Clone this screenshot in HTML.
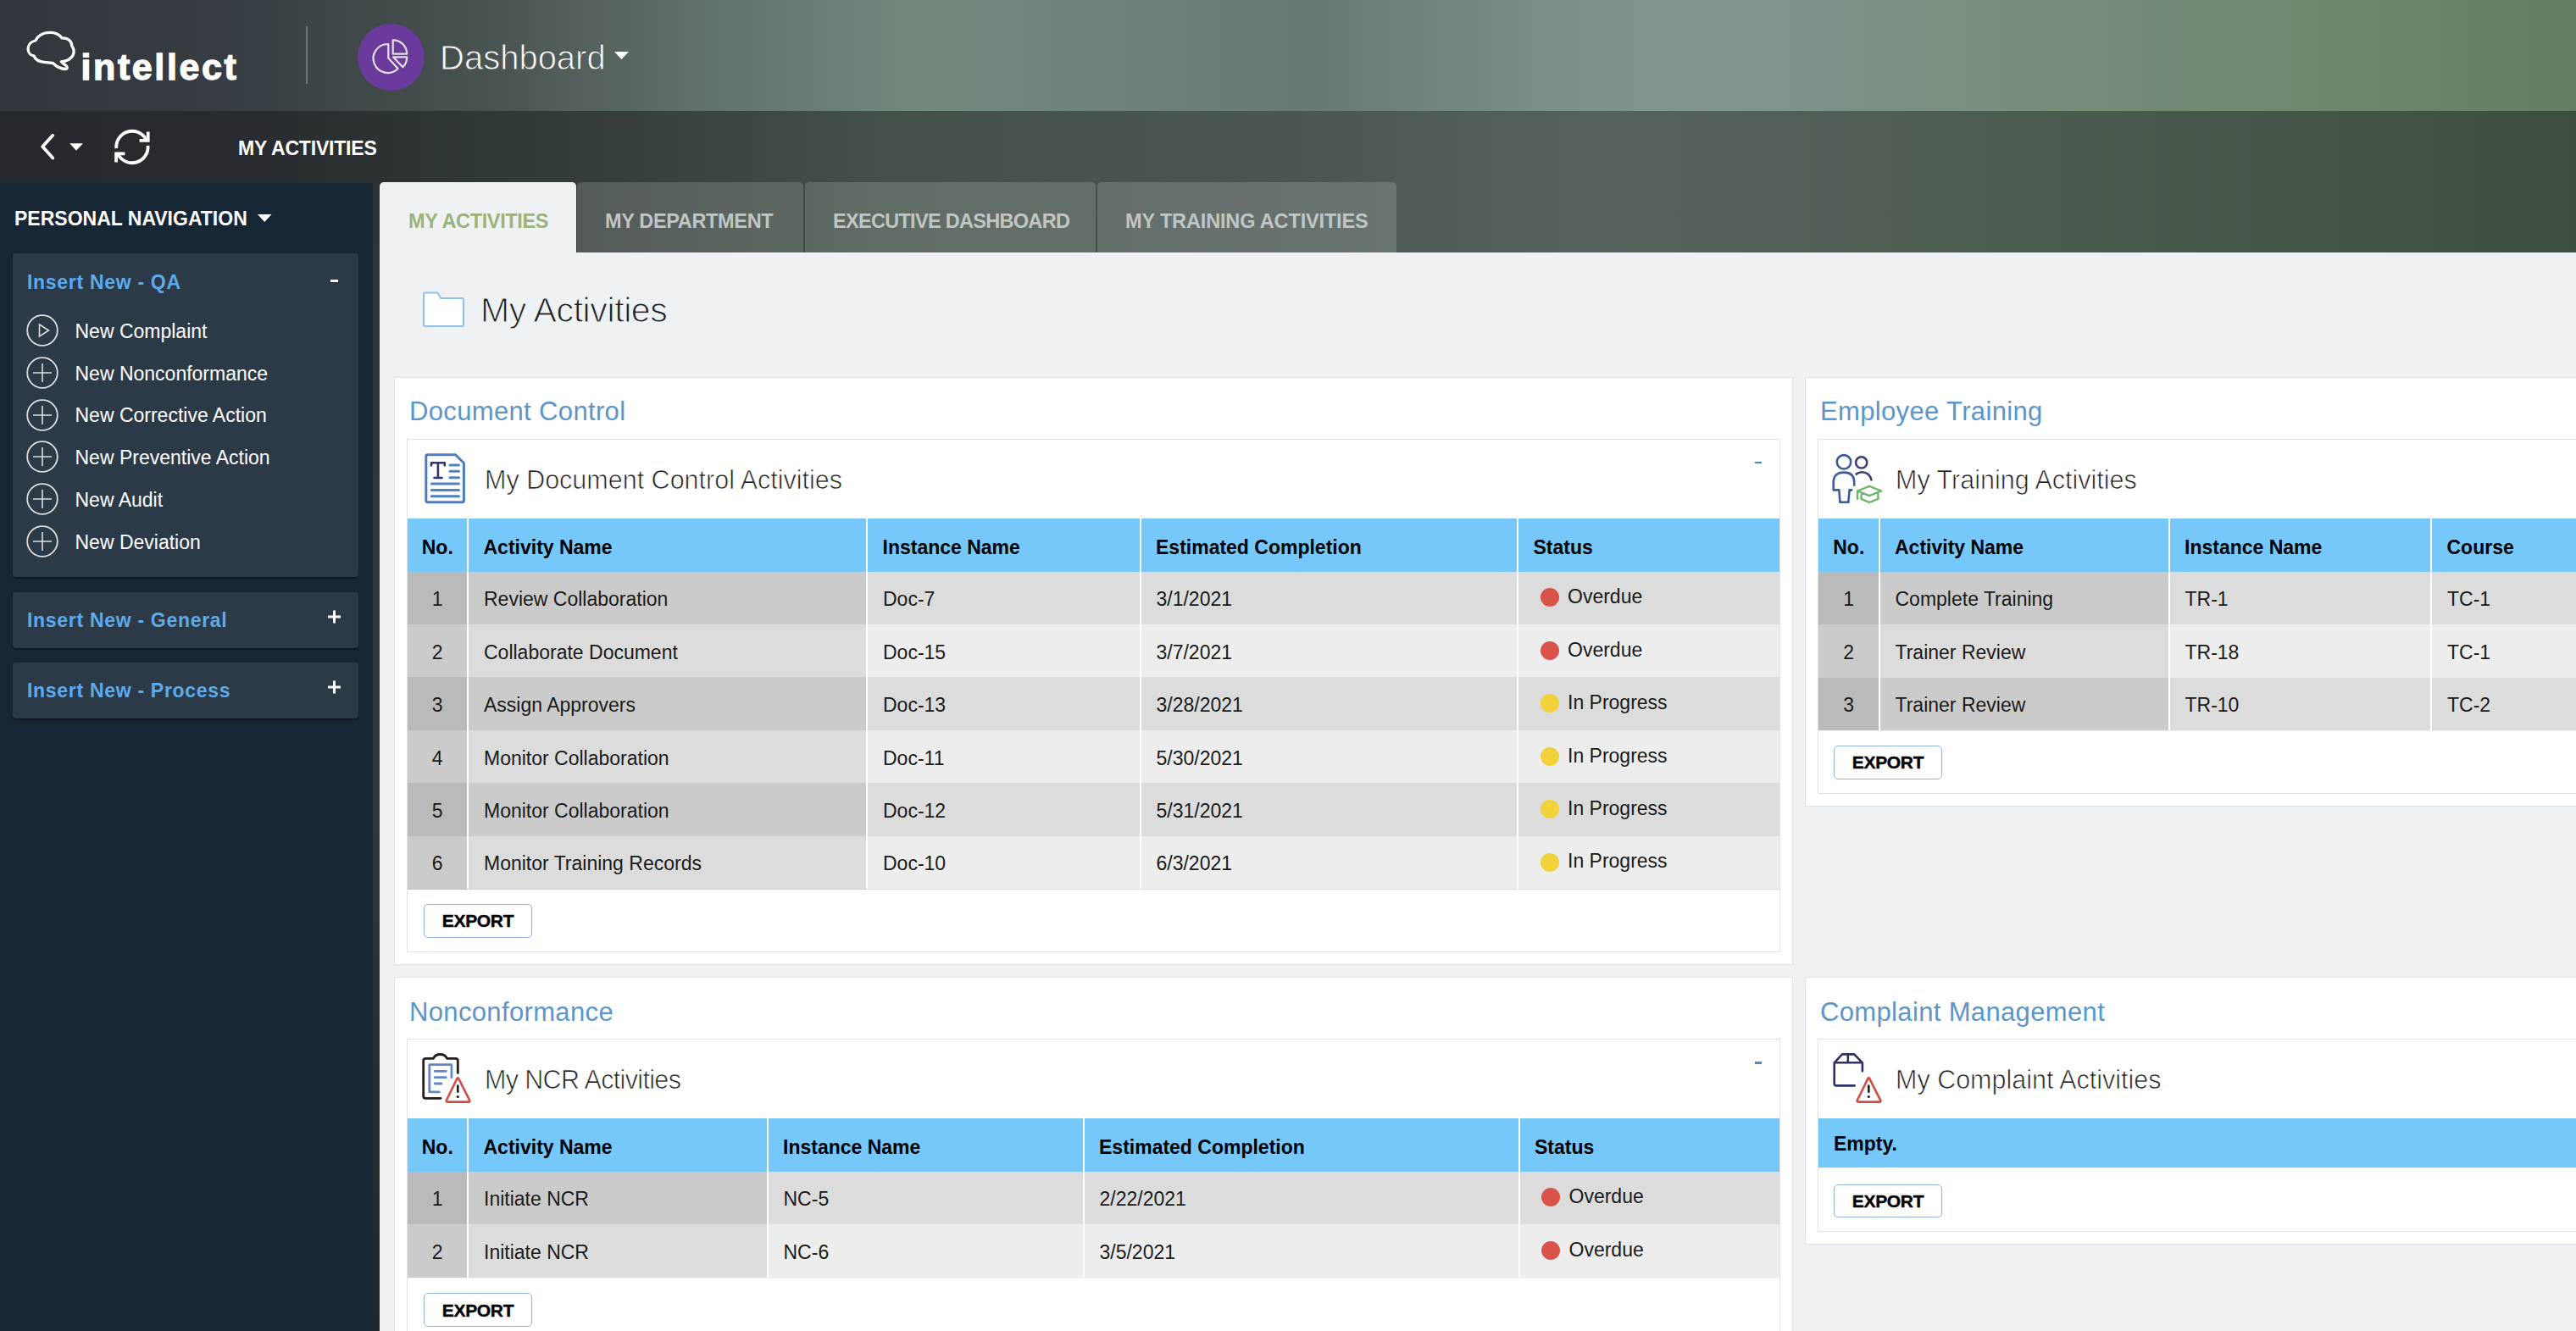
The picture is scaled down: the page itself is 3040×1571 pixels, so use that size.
<!DOCTYPE html>
<html><head><meta charset="utf-8">
<style>
*{box-sizing:border-box;margin:0;padding:0}
html,body{width:3040px;height:1571px;overflow:hidden}
body{position:relative;font-family:"Liberation Sans",sans-serif;background:#eff2f5;color:#222}
.a{position:absolute}
.t{position:absolute;line-height:1;white-space:nowrap}
#hdr{left:0;top:0;width:3040px;height:131px;background:linear-gradient(90deg,#32363d 0%,#363c42 8%,#46504f 18%,#63736d 28%,#738a7c 36%,#6f807a 44%,#687877 51%,#7b8e89 60%,#82958f 66%,#7b9082 74%,#748c78 82%,#6e8870 90%,#637c64 100%)}
#band{left:0;top:131px;width:3040px;height:167px;background:linear-gradient(90deg,#25282c 0%,#282c30 10%,#333b3a 22%,#435047 34%,#47534d 42%,#4b5653 50%,#56625d 62%,#525f56 70%,#4b5b4f 80%,#445548 90%,#3d4e40 100%)}
#side{left:0;top:216px;width:440px;height:1355px;background:#172634}
#strip{left:440px;top:215px;width:8px;height:1356px;background:linear-gradient(180deg,#2c3336 0%,#2e393c 35%,#2e383b 55%,#272d30 80%,#222629 100%)}
#content{left:448px;top:298px;width:2592px;height:1273px;background:#eff2f5}
.tab{position:absolute;top:215px;height:83px;border-radius:5px 5px 0 0;background:rgba(255,255,255,0.16)}
.tabt{font-weight:700;font-size:23.5px;color:#c0c6c4;letter-spacing:-0.35px}
.sp{position:absolute;left:15px;width:408px;background:#2c3a48;border-radius:4px;box-shadow:0 2px 1px rgba(0,0,0,0.35)}
.sph{font-weight:700;font-size:23px;color:#5eaaea;letter-spacing:0.7px}
.si{font-size:23px;color:#fff}
.card{position:absolute;background:#fff;border:1px solid #dfe3e7}
.ctitle{font-size:31px;color:#5b95c9}
.inner{position:absolute;background:#fff;border:1px solid #dfe3e7}
.ptitle{font-size:30.5px;color:#222;-webkit-text-stroke:0.7px #fff}
.btn{position:absolute;width:128px;height:40px;border:1.5px solid #8eb3dc;border-radius:5px;background:#fff}
.btnt{font-weight:700;font-size:21px;color:#000;letter-spacing:-0.3px;-webkit-text-stroke:0.4px #000}
</style></head><body>
<div id="hdr" class="a"></div>
<div id="band" class="a"></div>
<div id="side" class="a"></div>
<div id="strip" class="a"></div>
<div id="content" class="a"></div>

<svg class="a" style="left:25px;top:30px" width="70" height="60" viewBox="0 0 70 60">
<path d="M47.3,42.8 C52,42.5 58,40 61,35.5 C63,31 62,27 59.8,24.3 C60,19 55.5,14.5 48.2,14.9 C44,9.5 38.5,8.2 33.3,8.4 C25,8.5 19.5,13 16.7,18 C11.5,19 8,23 8.1,28 C8.2,32 11,35.5 14.9,36 C17,40.5 22,43 27,43.3 L37.5,44.5 C42,49 47,51.5 52.5,51.5 C55,51 54.5,48.5 52.5,47 C50.5,45.5 48.5,44.5 47.3,42.8 Z" fill="none" stroke="#fff" stroke-width="3.3" stroke-linejoin="round"/>
</svg>
<div class="t" style="left:95.5px;top:57.5px;font-size:43px;font-weight:700;color:#fff;letter-spacing:2.6px;-webkit-text-stroke:1.3px #fff">intellect</div>
<div class="a" style="left:361px;top:31px;width:1.5px;height:68px;background:rgba(255,255,255,0.28)"></div>
<div class="a" style="left:421.5px;top:27.5px;width:79px;height:79px;border-radius:50%;background:#6a3a9c"></div>
<svg class="a" style="left:421px;top:27px" width="80" height="80" viewBox="0 0 80 80">
<g fill="none" stroke="#e6e0ec" stroke-width="2.2" stroke-linejoin="round">
<path d="M37.3,25 A17,17 0 1 0 48.6,54 L37.3,41.5 Z"/>
<path d="M42.7,20.3 L42.7,36.7 L59.2,36.7 A16.4,16.4 0 0 0 42.7,20.3 Z"/>
<path d="M43,40.3 L59.2,40.3 A16.2,16.2 0 0 1 54.4,52.2 Z"/>
</g></svg>
<div class="t" style="left:519px;top:48px;font-size:40px;color:#fff;-webkit-text-stroke:0.9px #4b5755">Dashboard</div>
<svg class="a" style="left:724px;top:60px" width="20" height="12"><path d="M1,1 L18,1 L9.5,10 Z" fill="#fff"/></svg>
<svg class="a" style="left:40px;top:145px" width="150" height="55" viewBox="0 0 150 55">
<path d="M22.3,14.8 L10.2,28 L22.3,41.6" fill="none" stroke="#fff" stroke-width="3.8" stroke-linecap="round" stroke-linejoin="round"/>
<path d="M42.2,24.3 L58,24.3 L50,32.8 Z" fill="#fff"/>
<g fill="none" stroke="#fff" stroke-width="3.8">
<path d="M97.27,30.13 A18.7,18.7 0 0 1 132.1,19.15"/>
<path d="M134.53,26.87 A18.7,18.7 0 0 1 99.7,37.85"/>
<path d="M134.7,10.6 V20.8 H124.6" stroke-linecap="butt" stroke-linejoin="miter"/>
<path d="M97.1,46.5 V36.3 H107.4" stroke-linecap="butt" stroke-linejoin="miter"/>
</g>
</svg>
<div class="t" style="left:281px;top:163.5px;font-size:23px;font-weight:700;color:#fff;letter-spacing:-0.2px">MY ACTIVITIES</div>
<div class="tab" style="left:448px;width:232px;background:#eff2f5"></div>
<div class="t tabt" style="left:482px;top:249.5px;color:#9cb27a">MY ACTIVITIES</div>
<div class="tab" style="left:681px;width:267px"></div>
<div class="t tabt" style="left:714px;top:249.5px">MY DEPARTMENT</div>
<div class="tab" style="left:950px;width:343px"></div>
<div class="t tabt" style="left:983px;top:249.5px;letter-spacing:-0.7px">EXECUTIVE DASHBOARD</div>
<div class="tab" style="left:1295px;width:353px"></div>
<div class="t tabt" style="left:1328px;top:249.5px;letter-spacing:-0.15px">MY TRAINING ACTIVITIES</div>

<div class="t" style="left:17px;top:247px;font-size:23px;font-weight:700;color:#fff">PERSONAL NAVIGATION</div>
<svg class="a" style="left:303px;top:252px" width="20" height="12"><path d="M1,1 L17.5,1 L9.2,10 Z" fill="#fff"/></svg>
<div class="sp" style="top:299px;height:382px"></div>
<div class="t sph" style="left:32px;top:322px">Insert New - QA</div>
<div class="a" style="left:390px;top:330px;width:9px;height:3px;background:#fff"></div>
<div class="sp" style="top:699px;height:66px"></div>
<div class="t sph" style="left:32px;top:720.5px">Insert New - General</div>
<svg class="a" style="left:386px;top:719px" width="18" height="18"><path d="M8.5,1.5 V16.5 M1,9 H16" stroke="#fff" stroke-width="3"/></svg>
<div class="sp" style="top:782px;height:66px"></div>
<div class="t sph" style="left:32px;top:803.5px">Insert New - Process</div>
<svg class="a" style="left:386px;top:802px" width="18" height="18"><path d="M8.5,1.5 V16.5 M1,9 H16" stroke="#fff" stroke-width="3"/></svg>
<svg class="a" style="left:31px;top:371.0px" width="38" height="38" viewBox="0 0 38 38"><circle cx="19" cy="19" r="17.8" fill="none" stroke="#ddd" stroke-width="1.8"/><path d="M15.5,12 L26.5,19 L15.5,26 Z" fill="none" stroke="#ddd" stroke-width="1.6" stroke-linejoin="miter"/></svg>
<div class="t si" style="left:88.5px;top:379.8px">New Complaint</div>
<svg class="a" style="left:31px;top:420.8px" width="38" height="38" viewBox="0 0 38 38"><circle cx="19" cy="19" r="17.8" fill="none" stroke="#ddd" stroke-width="1.8"/><path d="M19,8 V30 M8,19 H30" stroke="#ddd" stroke-width="1.6"/></svg>
<div class="t si" style="left:88.5px;top:429.6px">New Nonconformance</div>
<svg class="a" style="left:31px;top:470.6px" width="38" height="38" viewBox="0 0 38 38"><circle cx="19" cy="19" r="17.8" fill="none" stroke="#ddd" stroke-width="1.8"/><path d="M19,8 V30 M8,19 H30" stroke="#ddd" stroke-width="1.6"/></svg>
<div class="t si" style="left:88.5px;top:479.4px">New Corrective Action</div>
<svg class="a" style="left:31px;top:520.4px" width="38" height="38" viewBox="0 0 38 38"><circle cx="19" cy="19" r="17.8" fill="none" stroke="#ddd" stroke-width="1.8"/><path d="M19,8 V30 M8,19 H30" stroke="#ddd" stroke-width="1.6"/></svg>
<div class="t si" style="left:88.5px;top:529.2px">New Preventive Action</div>
<svg class="a" style="left:31px;top:570.2px" width="38" height="38" viewBox="0 0 38 38"><circle cx="19" cy="19" r="17.8" fill="none" stroke="#ddd" stroke-width="1.8"/><path d="M19,8 V30 M8,19 H30" stroke="#ddd" stroke-width="1.6"/></svg>
<div class="t si" style="left:88.5px;top:579.0px">New Audit</div>
<svg class="a" style="left:31px;top:620.0px" width="38" height="38" viewBox="0 0 38 38"><circle cx="19" cy="19" r="17.8" fill="none" stroke="#ddd" stroke-width="1.8"/><path d="M19,8 V30 M8,19 H30" stroke="#ddd" stroke-width="1.6"/></svg>
<div class="t si" style="left:88.5px;top:628.8px">New Deviation</div>
<svg class="a" style="left:490px;top:335px" width="70" height="60" viewBox="0 0 70 60"><path d="M10,11.5 Q10,10.4 11.2,10.4 L25.6,10.4 Q26.6,10.4 27.1,11.3 L30.2,17.1 L55.8,17.1 Q57,17.1 57,18.3 L57,48.8 Q57,50 55.8,50 L11.2,50 Q10,50 10,48.8 Z" fill="#fff" stroke="#8ec1e9" stroke-width="2" stroke-linejoin="round"/></svg>
<div class="t " style="left:567.0px;top:346.1px;font-size:41px;color:#1e1e1e;letter-spacing:-0.4px;-webkit-text-stroke:1px #eff2f5">My Activities</div>
<div class="card" style="left:465.0px;top:444.5px;width:1651.0px;height:694.5px"></div>
<div class="t ctitle" style="left:483.0px;top:470.1px;font-size:31px;letter-spacing:0.35px">Document Control</div>
<div class="inner" style="left:480.0px;top:517.5px;width:1621.0px;height:606.0px"></div>
<svg class="a" style="left:490px;top:530px" width="70" height="70" viewBox="0 0 70 70"><g fill="none" stroke-width="3" stroke-linecap="round" stroke-linejoin="round">
<path d="M12.8,8.5 Q12.8,6.8 14.5,6.8 L47.6,6.8 L57.4,16.5 L57.4,61.1 Q57.4,62.7 55.7,62.7 L14.5,62.7 Q12.8,62.7 12.8,61.1 Z" stroke="#4a7dc0"/>
<path d="M41,19 H51.5 M41,26.3 H51.5 M41,33.7 H51.5 M19.3,41 H51.5 M19.3,48.4 H51.5 M19.3,55.8 H51.5" stroke="#4f82c2"/>
<path d="M19,19.5 L19,16.3 L34.8,16.3 L34.8,19.5 M26.9,16.3 L26.9,34 M22.5,34 L31.5,34" stroke="#2f3672" stroke-width="2.6"/>
</g></svg>
<div class="t ptitle" style="left:572.0px;top:550.6px;font-size:30.5px;">My Document Control Activities</div>
<div class="a" style="left:2071.0px;top:544.5px;width:8px;height:2.5px;background:#4a8ac8"></div>
<div class="a" style="left:480.5px;top:612.0px;width:1619.5px;height:62.5px;background:#75c8f9"></div>
<div class="a" style="left:480.5px;top:674.5px;width:71.5px;height:62.75px;background:#bababa"></div>
<div class="a" style="left:552.0px;top:674.5px;width:471.0px;height:62.75px;background:#cbcbcb"></div>
<div class="a" style="left:1023.0px;top:674.5px;width:322.5px;height:62.75px;background:#dcdcdc"></div>
<div class="a" style="left:1345.5px;top:674.5px;width:445.5px;height:62.75px;background:#dcdcdc"></div>
<div class="a" style="left:1791.0px;top:674.5px;width:309.0px;height:62.75px;background:#dcdcdc"></div>
<div class="a" style="left:480.5px;top:737.0px;width:71.5px;height:62.75px;background:#cbcbcb"></div>
<div class="a" style="left:552.0px;top:737.0px;width:471.0px;height:62.75px;background:#dcdcdc"></div>
<div class="a" style="left:1023.0px;top:737.0px;width:322.5px;height:62.75px;background:#ededed"></div>
<div class="a" style="left:1345.5px;top:737.0px;width:445.5px;height:62.75px;background:#ededed"></div>
<div class="a" style="left:1791.0px;top:737.0px;width:309.0px;height:62.75px;background:#ededed"></div>
<div class="a" style="left:480.5px;top:799.4px;width:71.5px;height:62.75px;background:#bababa"></div>
<div class="a" style="left:552.0px;top:799.4px;width:471.0px;height:62.75px;background:#cbcbcb"></div>
<div class="a" style="left:1023.0px;top:799.4px;width:322.5px;height:62.75px;background:#dcdcdc"></div>
<div class="a" style="left:1345.5px;top:799.4px;width:445.5px;height:62.75px;background:#dcdcdc"></div>
<div class="a" style="left:1791.0px;top:799.4px;width:309.0px;height:62.75px;background:#dcdcdc"></div>
<div class="a" style="left:480.5px;top:861.9px;width:71.5px;height:62.75px;background:#cbcbcb"></div>
<div class="a" style="left:552.0px;top:861.9px;width:471.0px;height:62.75px;background:#dcdcdc"></div>
<div class="a" style="left:1023.0px;top:861.9px;width:322.5px;height:62.75px;background:#ededed"></div>
<div class="a" style="left:1345.5px;top:861.9px;width:445.5px;height:62.75px;background:#ededed"></div>
<div class="a" style="left:1791.0px;top:861.9px;width:309.0px;height:62.75px;background:#ededed"></div>
<div class="a" style="left:480.5px;top:924.3px;width:71.5px;height:62.75px;background:#bababa"></div>
<div class="a" style="left:552.0px;top:924.3px;width:471.0px;height:62.75px;background:#cbcbcb"></div>
<div class="a" style="left:1023.0px;top:924.3px;width:322.5px;height:62.75px;background:#dcdcdc"></div>
<div class="a" style="left:1345.5px;top:924.3px;width:445.5px;height:62.75px;background:#dcdcdc"></div>
<div class="a" style="left:1791.0px;top:924.3px;width:309.0px;height:62.75px;background:#dcdcdc"></div>
<div class="a" style="left:480.5px;top:986.8px;width:71.5px;height:62.75px;background:#cbcbcb"></div>
<div class="a" style="left:552.0px;top:986.8px;width:471.0px;height:62.75px;background:#dcdcdc"></div>
<div class="a" style="left:1023.0px;top:986.8px;width:322.5px;height:62.75px;background:#ededed"></div>
<div class="a" style="left:1345.5px;top:986.8px;width:445.5px;height:62.75px;background:#ededed"></div>
<div class="a" style="left:1791.0px;top:986.8px;width:309.0px;height:62.75px;background:#ededed"></div>
<div class="a" style="left:480.5px;top:1049.2px;width:1619.5px;height:2px;background:linear-gradient(rgba(0,0,0,0.07),rgba(0,0,0,0))"></div>
<div class="a" style="left:551.0px;top:612.0px;width:2px;height:437.2px;background:#fff"></div>
<div class="a" style="left:1022.0px;top:612.0px;width:2px;height:437.2px;background:#fff"></div>
<div class="a" style="left:1344.5px;top:612.0px;width:2px;height:437.2px;background:#fff"></div>
<div class="a" style="left:1790.0px;top:612.0px;width:2px;height:437.2px;background:#fff"></div>
<div class="t" style="left:480.5px;top:634.7px;width:71.5px;text-align:center;font-size:23px;font-weight:700;color:#000">No.</div>
<div class="t " style="left:570.5px;top:634.7px;font-size:23px;font-weight:700;color:#000">Activity Name</div>
<div class="t " style="left:1041.5px;top:634.7px;font-size:23px;font-weight:700;color:#000">Instance Name</div>
<div class="t " style="left:1364.0px;top:634.7px;font-size:23px;font-weight:700;color:#000">Estimated Completion</div>
<div class="t " style="left:1809.5px;top:634.7px;font-size:23px;font-weight:700;color:#000">Status</div>
<div class="t" style="left:480.5px;top:696.2px;width:71.5px;text-align:center;font-size:23px;color:#1a1a1a">1</div>
<div class="t " style="left:571.0px;top:696.2px;font-size:23px;color:#1a1a1a">Review Collaboration</div>
<div class="t " style="left:1042.0px;top:696.2px;font-size:23px;color:#1a1a1a">Doc-7</div>
<div class="t " style="left:1364.5px;top:696.2px;font-size:23px;color:#1a1a1a">3/1/2021</div>
<div class="a" style="left:1817.5px;top:694.2px;width:22px;height:22px;border-radius:50%;background:#d9534a"></div>
<div class="t " style="left:1850.0px;top:693.2px;font-size:23px;color:#1a1a1a">Overdue</div>
<div class="t" style="left:480.5px;top:758.6px;width:71.5px;text-align:center;font-size:23px;color:#1a1a1a">2</div>
<div class="t " style="left:571.0px;top:758.6px;font-size:23px;color:#1a1a1a">Collaborate Document</div>
<div class="t " style="left:1042.0px;top:758.6px;font-size:23px;color:#1a1a1a">Doc-15</div>
<div class="t " style="left:1364.5px;top:758.6px;font-size:23px;color:#1a1a1a">3/7/2021</div>
<div class="a" style="left:1817.5px;top:756.7px;width:22px;height:22px;border-radius:50%;background:#d9534a"></div>
<div class="t " style="left:1850.0px;top:755.6px;font-size:23px;color:#1a1a1a">Overdue</div>
<div class="t" style="left:480.5px;top:821.1px;width:71.5px;text-align:center;font-size:23px;color:#1a1a1a">3</div>
<div class="t " style="left:571.0px;top:821.1px;font-size:23px;color:#1a1a1a">Assign Approvers</div>
<div class="t " style="left:1042.0px;top:821.1px;font-size:23px;color:#1a1a1a">Doc-13</div>
<div class="t " style="left:1364.5px;top:821.1px;font-size:23px;color:#1a1a1a">3/28/2021</div>
<div class="a" style="left:1817.5px;top:819.1px;width:22px;height:22px;border-radius:50%;background:#f2d23a"></div>
<div class="t " style="left:1850.0px;top:818.1px;font-size:23px;color:#1a1a1a">In Progress</div>
<div class="t" style="left:480.5px;top:883.5px;width:71.5px;text-align:center;font-size:23px;color:#1a1a1a">4</div>
<div class="t " style="left:571.0px;top:883.5px;font-size:23px;color:#1a1a1a">Monitor Collaboration</div>
<div class="t " style="left:1042.0px;top:883.5px;font-size:23px;color:#1a1a1a">Doc-11</div>
<div class="t " style="left:1364.5px;top:883.5px;font-size:23px;color:#1a1a1a">5/30/2021</div>
<div class="a" style="left:1817.5px;top:881.6px;width:22px;height:22px;border-radius:50%;background:#f2d23a"></div>
<div class="t " style="left:1850.0px;top:880.5px;font-size:23px;color:#1a1a1a">In Progress</div>
<div class="t" style="left:480.5px;top:946.0px;width:71.5px;text-align:center;font-size:23px;color:#1a1a1a">5</div>
<div class="t " style="left:571.0px;top:946.0px;font-size:23px;color:#1a1a1a">Monitor Collaboration</div>
<div class="t " style="left:1042.0px;top:946.0px;font-size:23px;color:#1a1a1a">Doc-12</div>
<div class="t " style="left:1364.5px;top:946.0px;font-size:23px;color:#1a1a1a">5/31/2021</div>
<div class="a" style="left:1817.5px;top:944.0px;width:22px;height:22px;border-radius:50%;background:#f2d23a"></div>
<div class="t " style="left:1850.0px;top:943.0px;font-size:23px;color:#1a1a1a">In Progress</div>
<div class="t" style="left:480.5px;top:1008.4px;width:71.5px;text-align:center;font-size:23px;color:#1a1a1a">6</div>
<div class="t " style="left:571.0px;top:1008.4px;font-size:23px;color:#1a1a1a">Monitor Training Records</div>
<div class="t " style="left:1042.0px;top:1008.4px;font-size:23px;color:#1a1a1a">Doc-10</div>
<div class="t " style="left:1364.5px;top:1008.4px;font-size:23px;color:#1a1a1a">6/3/2021</div>
<div class="a" style="left:1817.5px;top:1006.5px;width:22px;height:22px;border-radius:50%;background:#f2d23a"></div>
<div class="t " style="left:1850.0px;top:1005.4px;font-size:23px;color:#1a1a1a">In Progress</div>
<div class="btn" style="left:500.0px;top:1066.5px;height:40.0px"></div>
<div class="t btnt" style="left:500.0px;top:1076.2px;font-size:21px;width:128px;text-align:center">EXPORT</div>
<div class="card" style="left:2130.0px;top:444.5px;width:1200.0px;height:507.5px"></div>
<div class="t ctitle" style="left:2148.0px;top:470.1px;font-size:31px;letter-spacing:0.35px">Employee Training</div>
<div class="inner" style="left:2145.0px;top:517.5px;width:1200.0px;height:419.0px"></div>
<svg class="a" style="left:2155px;top:530px" width="70" height="70" viewBox="0 0 70 70"><g fill="none" stroke-width="2.6" stroke-linecap="round" stroke-linejoin="round">
<circle cx="21" cy="15.3" r="8.2" stroke="#3c5a9e"/>
<path d="M33.2,42.8 L33.2,39.5 Q33.2,27.6 21,27.6 Q8.7,27.6 8.7,39.5 L8.7,48.4 L15.3,48.4 L16.5,62.8 L26.3,62.8 L27.6,48.4 L30.2,48.4" stroke="#3c5a9e"/>
<circle cx="41.7" cy="15.9" r="6.6" stroke="#3a3e72"/>
<path d="M35.6,29.6 Q39,27.2 42,27.2 Q51,27.2 53.5,36.3" stroke="#3a3e72"/>
<path d="M37,49.5 L51,43.8 L65.2,49.5 L51,55.2 Z M41.6,51.6 L41.6,58.8 L51,63 L61.4,58.8 L61.4,51.6 M37,49.5 L37,58.8" stroke="#6bb56b" stroke-width="2.4"/>
</g></svg>
<div class="t ptitle" style="left:2237.0px;top:550.6px;font-size:30.5px;">My Training Activities</div>
<div class="a" style="left:2146.0px;top:612.0px;width:1154.0px;height:62.5px;background:#75c8f9"></div>
<div class="a" style="left:2146.0px;top:674.5px;width:71.5px;height:62.80px;background:#bababa"></div>
<div class="a" style="left:2217.5px;top:674.5px;width:342.0px;height:62.80px;background:#cbcbcb"></div>
<div class="a" style="left:2559.5px;top:674.5px;width:309.5px;height:62.80px;background:#dcdcdc"></div>
<div class="a" style="left:2869.0px;top:674.5px;width:431.0px;height:62.80px;background:#dcdcdc"></div>
<div class="a" style="left:2146.0px;top:737.0px;width:71.5px;height:62.80px;background:#cbcbcb"></div>
<div class="a" style="left:2217.5px;top:737.0px;width:342.0px;height:62.80px;background:#dcdcdc"></div>
<div class="a" style="left:2559.5px;top:737.0px;width:309.5px;height:62.80px;background:#ededed"></div>
<div class="a" style="left:2869.0px;top:737.0px;width:431.0px;height:62.80px;background:#ededed"></div>
<div class="a" style="left:2146.0px;top:799.5px;width:71.5px;height:62.80px;background:#bababa"></div>
<div class="a" style="left:2217.5px;top:799.5px;width:342.0px;height:62.80px;background:#cbcbcb"></div>
<div class="a" style="left:2559.5px;top:799.5px;width:309.5px;height:62.80px;background:#dcdcdc"></div>
<div class="a" style="left:2869.0px;top:799.5px;width:431.0px;height:62.80px;background:#dcdcdc"></div>
<div class="a" style="left:2146.0px;top:862.0px;width:1154.0px;height:2px;background:linear-gradient(rgba(0,0,0,0.07),rgba(0,0,0,0))"></div>
<div class="a" style="left:2216.5px;top:612.0px;width:2px;height:250.0px;background:#fff"></div>
<div class="a" style="left:2558.5px;top:612.0px;width:2px;height:250.0px;background:#fff"></div>
<div class="a" style="left:2868.0px;top:612.0px;width:2px;height:250.0px;background:#fff"></div>
<div class="t" style="left:2146.0px;top:634.7px;width:71.5px;text-align:center;font-size:23px;font-weight:700;color:#000">No.</div>
<div class="t " style="left:2236.0px;top:634.7px;font-size:23px;font-weight:700;color:#000">Activity Name</div>
<div class="t " style="left:2578.0px;top:634.7px;font-size:23px;font-weight:700;color:#000">Instance Name</div>
<div class="t " style="left:2887.5px;top:634.7px;font-size:23px;font-weight:700;color:#000">Course</div>
<div class="t" style="left:2146.0px;top:696.2px;width:71.5px;text-align:center;font-size:23px;color:#1a1a1a">1</div>
<div class="t " style="left:2236.5px;top:696.2px;font-size:23px;color:#1a1a1a">Complete Training</div>
<div class="t " style="left:2578.5px;top:696.2px;font-size:23px;color:#1a1a1a">TR-1</div>
<div class="t " style="left:2888.0px;top:696.2px;font-size:23px;color:#1a1a1a">TC-1</div>
<div class="t" style="left:2146.0px;top:758.7px;width:71.5px;text-align:center;font-size:23px;color:#1a1a1a">2</div>
<div class="t " style="left:2236.5px;top:758.7px;font-size:23px;color:#1a1a1a">Trainer Review</div>
<div class="t " style="left:2578.5px;top:758.7px;font-size:23px;color:#1a1a1a">TR-18</div>
<div class="t " style="left:2888.0px;top:758.7px;font-size:23px;color:#1a1a1a">TC-1</div>
<div class="t" style="left:2146.0px;top:821.2px;width:71.5px;text-align:center;font-size:23px;color:#1a1a1a">3</div>
<div class="t " style="left:2236.5px;top:821.2px;font-size:23px;color:#1a1a1a">Trainer Review</div>
<div class="t " style="left:2578.5px;top:821.2px;font-size:23px;color:#1a1a1a">TR-10</div>
<div class="t " style="left:2888.0px;top:821.2px;font-size:23px;color:#1a1a1a">TC-2</div>
<div class="btn" style="left:2164.0px;top:879.5px;height:40.0px"></div>
<div class="t btnt" style="left:2164.0px;top:889.1px;font-size:21px;width:128px;text-align:center">EXPORT</div>
<div class="card" style="left:465.0px;top:1153.0px;width:1651.0px;height:600.0px"></div>
<div class="t ctitle" style="left:483.0px;top:1178.7px;font-size:31px;letter-spacing:0.35px">Nonconformance</div>
<div class="inner" style="left:480.0px;top:1226.0px;width:1621.0px;height:500.0px"></div>
<svg class="a" style="left:490px;top:1238px" width="70" height="70" viewBox="0 0 70 70"><g fill="none" stroke-width="2.8" stroke-linecap="round" stroke-linejoin="round">
<path d="M30,58.4 L12,58.4 Q9.7,58.4 9.7,56 L9.7,14 Q9.7,11.3 12.4,11.3 L21.5,11.3 Q23.5,6.5 29.5,6.5 Q35.5,6.5 37.5,11.3 L47.5,11.3 Q50.3,11.3 50.3,14 L50.3,28.4" stroke="#1e1e1e"/>
<path d="M28.4,50.8 L16.8,50.8 L16.8,18.7 L42.9,18.7 L42.9,33.7" stroke="#6089c6"/>
<path d="M23.2,26.3 H36.3 M23.2,33.7 H36.3 M23.2,41 H31" stroke="#6089c6"/>
<path d="M49.5,34.8 Q50.3,33.6 51.1,34.8 L64.3,60.8 Q64.8,62.6 63,62.6 L38,62.6 Q36.1,62.6 36.8,60.8 Z" stroke="#d44b43" stroke-width="2.6"/>
<path d="M50.3,43.5 L50.3,50.8" stroke="#1e1e1e" stroke-width="2.6"/>
<circle cx="50.3" cy="56.5" r="1.6" fill="#1e1e1e" stroke="none"/>
</g></svg>
<div class="t ptitle" style="left:572.0px;top:1259.1px;font-size:30.5px;letter-spacing:-0.65px">My NCR Activities</div>
<div class="a" style="left:2071.0px;top:1253.0px;width:8px;height:2.5px;background:#4a8ac8"></div>
<div class="a" style="left:480.5px;top:1320.0px;width:1619.5px;height:62.5px;background:#75c8f9"></div>
<div class="a" style="left:480.5px;top:1382.5px;width:71.5px;height:63.10px;background:#bababa"></div>
<div class="a" style="left:552.0px;top:1382.5px;width:353.5px;height:63.10px;background:#cbcbcb"></div>
<div class="a" style="left:905.5px;top:1382.5px;width:373.0px;height:63.10px;background:#dcdcdc"></div>
<div class="a" style="left:1278.5px;top:1382.5px;width:514.0px;height:63.10px;background:#dcdcdc"></div>
<div class="a" style="left:1792.5px;top:1382.5px;width:307.5px;height:63.10px;background:#dcdcdc"></div>
<div class="a" style="left:480.5px;top:1445.3px;width:71.5px;height:63.10px;background:#cbcbcb"></div>
<div class="a" style="left:552.0px;top:1445.3px;width:353.5px;height:63.10px;background:#dcdcdc"></div>
<div class="a" style="left:905.5px;top:1445.3px;width:373.0px;height:63.10px;background:#ededed"></div>
<div class="a" style="left:1278.5px;top:1445.3px;width:514.0px;height:63.10px;background:#ededed"></div>
<div class="a" style="left:1792.5px;top:1445.3px;width:307.5px;height:63.10px;background:#ededed"></div>
<div class="a" style="left:480.5px;top:1508.1px;width:1619.5px;height:2px;background:linear-gradient(rgba(0,0,0,0.07),rgba(0,0,0,0))"></div>
<div class="a" style="left:551.0px;top:1320.0px;width:2px;height:188.1px;background:#fff"></div>
<div class="a" style="left:904.5px;top:1320.0px;width:2px;height:188.1px;background:#fff"></div>
<div class="a" style="left:1277.5px;top:1320.0px;width:2px;height:188.1px;background:#fff"></div>
<div class="a" style="left:1791.5px;top:1320.0px;width:2px;height:188.1px;background:#fff"></div>
<div class="t" style="left:480.5px;top:1342.7px;width:71.5px;text-align:center;font-size:23px;font-weight:700;color:#000">No.</div>
<div class="t " style="left:570.5px;top:1342.7px;font-size:23px;font-weight:700;color:#000">Activity Name</div>
<div class="t " style="left:924.0px;top:1342.7px;font-size:23px;font-weight:700;color:#000">Instance Name</div>
<div class="t " style="left:1297.0px;top:1342.7px;font-size:23px;font-weight:700;color:#000">Estimated Completion</div>
<div class="t " style="left:1811.0px;top:1342.7px;font-size:23px;font-weight:700;color:#000">Status</div>
<div class="t" style="left:480.5px;top:1404.4px;width:71.5px;text-align:center;font-size:23px;color:#1a1a1a">1</div>
<div class="t " style="left:571.0px;top:1404.4px;font-size:23px;color:#1a1a1a">Initiate NCR</div>
<div class="t " style="left:924.5px;top:1404.4px;font-size:23px;color:#1a1a1a">NC-5</div>
<div class="t " style="left:1297.5px;top:1404.4px;font-size:23px;color:#1a1a1a">2/22/2021</div>
<div class="a" style="left:1819.0px;top:1402.4px;width:22px;height:22px;border-radius:50%;background:#d9534a"></div>
<div class="t " style="left:1851.5px;top:1401.4px;font-size:23px;color:#1a1a1a">Overdue</div>
<div class="t" style="left:480.5px;top:1467.2px;width:71.5px;text-align:center;font-size:23px;color:#1a1a1a">2</div>
<div class="t " style="left:571.0px;top:1467.2px;font-size:23px;color:#1a1a1a">Initiate NCR</div>
<div class="t " style="left:924.5px;top:1467.2px;font-size:23px;color:#1a1a1a">NC-6</div>
<div class="t " style="left:1297.5px;top:1467.2px;font-size:23px;color:#1a1a1a">3/5/2021</div>
<div class="a" style="left:1819.0px;top:1465.2px;width:22px;height:22px;border-radius:50%;background:#d9534a"></div>
<div class="t " style="left:1851.5px;top:1464.2px;font-size:23px;color:#1a1a1a">Overdue</div>
<div class="btn" style="left:500.0px;top:1526.0px;height:40.0px"></div>
<div class="t btnt" style="left:500.0px;top:1535.7px;font-size:21px;width:128px;text-align:center">EXPORT</div>
<div class="card" style="left:2130.0px;top:1153.0px;width:1200.0px;height:316.0px"></div>
<div class="t ctitle" style="left:2148.0px;top:1178.7px;font-size:31px;letter-spacing:0.35px">Complaint Management</div>
<div class="inner" style="left:2145.0px;top:1226.0px;width:1200.0px;height:228.0px"></div>
<svg class="a" style="left:2155px;top:1238px" width="70" height="70" viewBox="0 0 70 70"><g fill="none" stroke-width="2.6" stroke-linecap="round" stroke-linejoin="round">
<path d="M33.7,43.4 L12,43.4 Q9.7,43.4 9.7,41 L9.7,16.3 L19,6.4 L33.2,6.4 L42.9,16.3 L42.9,26.3 M9.7,16.3 L42.9,16.3 M25.8,6.4 L25.8,16.3" stroke="#2c3266"/>
<path d="M49.5,34.8 Q50.3,33.6 51.1,34.8 L64.3,60.8 Q64.8,62.6 63,62.6 L38,62.6 Q36.1,62.6 36.8,60.8 Z" stroke="#d44b43" stroke-width="2.6"/>
<path d="M50.3,43.5 L50.3,50.8" stroke="#1e1e1e" stroke-width="2.6"/>
<circle cx="50.3" cy="56.5" r="1.6" fill="#1e1e1e" stroke="none"/>
</g></svg>
<div class="t ptitle" style="left:2237.0px;top:1259.1px;font-size:30.5px;">My Complaint Activities</div>
<div class="a" style="left:2146px;top:1320px;width:1000px;height:58px;background:#75c8f9"></div>
<div class="a" style="left:2146px;top:1378px;width:1000px;height:2px;background:linear-gradient(rgba(0,0,0,0.07),rgba(0,0,0,0))"></div>
<div class="t " style="left:2164.0px;top:1339.0px;font-size:23px;font-weight:700;color:#000">Empty.</div>
<div class="btn" style="left:2164.0px;top:1397.5px;height:39.0px"></div>
<div class="t btnt" style="left:2164.0px;top:1406.7px;font-size:21px;width:128px;text-align:center">EXPORT</div>
</body></html>
